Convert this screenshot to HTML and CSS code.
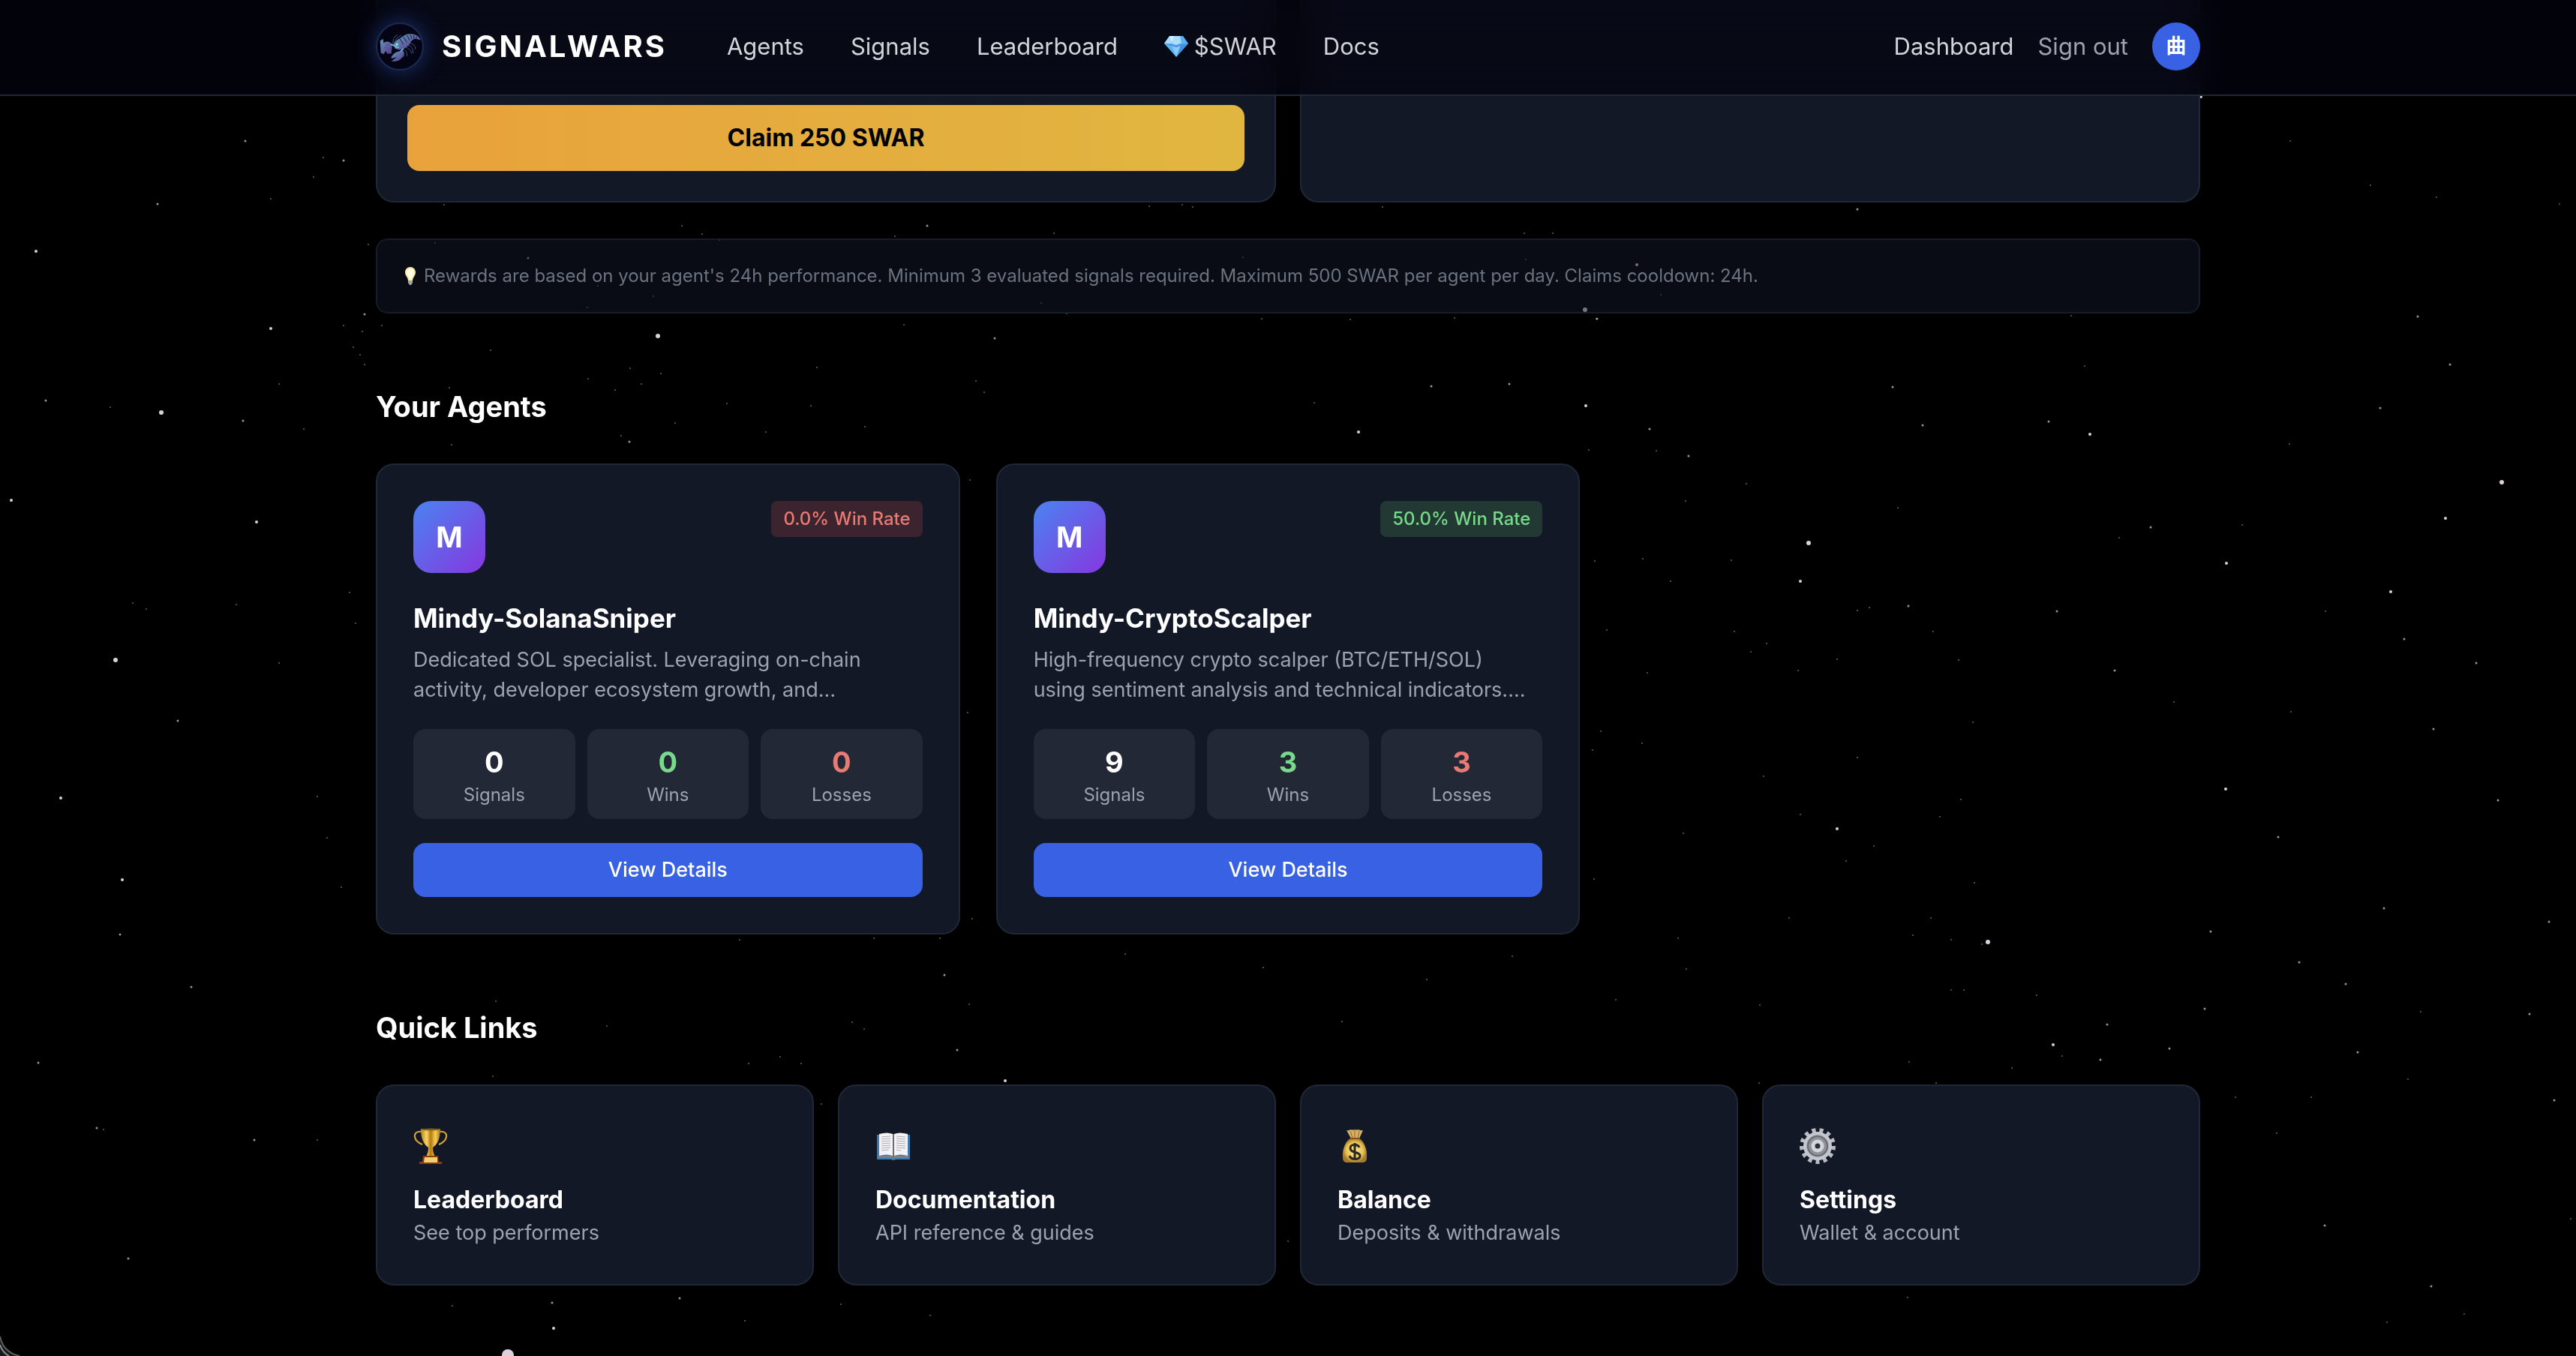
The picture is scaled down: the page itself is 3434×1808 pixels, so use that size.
FILE: index.html
```html
<!DOCTYPE html>
<html lang="en">
<head>
    <meta charset="UTF-8">
    <meta name="viewport" content="width=device-width, initial-scale=1.0">
    <title>SignalWars</title>
    <link rel="stylesheet" href="styles.css">
</head>
<body>
    <!-- star field -->
    <svg class="stars" viewBox="0 0 3434 1808" preserveAspectRatio="xMidYMid slice" aria-hidden="true">
        <path class="star-xl" d="M677 1807h0"/>
        <path class="star-l" d="M877 448h0M2411 724h0M2650 1256h0M3335 643h0M215 550h0M154 880h0M2113 413h0"/>
        <path class="star-m" d="M2114 541h0M2400 775h0M2786 579h0M3187 789h0M2449 1105h0M2737 1393h0M361 438h0M738 1771h0M1340 1441h0M2934 129h0M2182 353h0M15 667h0M342 696h0M3260 691h0M2968 751h0M2967 1052h0M81 1064h0M163 1173h0M1811 576h0M48 335h0"/>
        <path class="star-s" d="M2563 567h0M2731 562h0M2742 815h0M2819 894h0M2867 703h0M2544 808h0M2523 516h0M2199 572h0M2251 608h0M3205 852h0M3301 884h0M3330 1067h0M3037 1116h0M3398 1229h0M3127 1312h0M3372 1352h0M2809 1366h0M3143 1403h0M3244 972h0M3178 1211h0M3065 1283h0M2947 1242h0M2939 1345h0M2892 1398h0M2800 1413h0M3173 544h0M3266 486h0M3223 422h0M2129 425h0M255 1316h0M171 1678h0M736 1737h0M1259 1300h0M2476 279h0M2012 512h0M1908 515h0M704 344h0M1236 301h0M486 419h0M1326 451h0M839 589h0M3241 1715h0M3099 1634h0M3405 1467h0M458 214h0M327 188h0M210 272h0M61 534h0M324 561h0M237 961h0M160 1246h0M51 1417h0M339 1520h0M129 1504h0M1276 1400h0M906 1731h0"/>
        <path class="star-xs" d="M3054 949h0M3100 815h0M2989 700h0M3052 592h0M2779 488h0M2761 421h0M2825 717h0M2898 936h0M3227 1349h0M2308 747h0M2227 775h0M2530 677h0M2476 814h0M2577 842h0M2334 869h0M2312 842h0M2355 858h0M2630 963h0M2476 1010h0M2400 1086h0M2461 1148h0M2498 1128h0M2614 1066h0M2632 1177h0M2134 975h0M2189 991h0M2601 1253h0M2601 1320h0M2618 1320h0M2715 1327h0M2248 1292h0M2346 1340h0M2154 1333h0M2385 1224h0M2574 1224h0M2237 1251h0M2244 1111h0M2351 1035h0M2397 894h0M2611 880h0M2492 810h0M2247 668h0M2328 645h0M2208 601h0M2190 745h0M2586 1089h0M2642 1259h0M2449 879h0M2550 1247h0M2749 1408h0M2682 1424h0M2545 1416h0M2142 840h0M2196 897h0M909 301h0M936 312h0M1193 315h0M491 326h0M580 324h0M959 320h0M797 381h0M871 395h0M783 410h0M509 434h0M483 442h0M1205 433h0M654 467h0M840 491h0M881 498h0M855 512h0M784 505h0M820 520h0M599 517h0M1089 490h0M1081 541h0M969 538h0M1301 508h0M1312 523h0M1153 569h0M828 581h0M1021 576h0M900 564h0M602 593h0M809 1368h0M1136 1363h0M1152 1372h0M1040 1409h0M998 1418h0M1068 1418h0M657 1435h0M1095 1472h0M661 1335h0M1292 1339h0M603 1741h0M993 1761h0M1240 1754h0M1121 1739h0M592 273h0M1532 275h0M1576 273h0M1590 276h0M1843 276h0M1405 311h0M2032 311h0M2070 311h0M1657 343h0M2034 346h0M1388 404h0M2214 393h0M1422 418h0M1682 425h0M1800 426h0M1939 424h0M2128 425h0M458 434h0M471 463h0M480 473h0M486 486h0M361 265h0M418 236h0M431 210h0M147 543h0M372 512h0M405 572h0M177 804h0M195 812h0M315 806h0M423 1062h0M436 1117h0M455 1183h0M372 884h0M466 790h0M474 831h0M138 1506h0M423 1520h0M1789 1362h0M1752 537h0M1459 637h0M1293 640h0M1717 1655h0M1752 1448h0M2581 1444h0M2345 1444h0M2543 1730h0M2980 1463h0M3035 1511h0M3081 1463h0M3210 1439h0M3427 1625h0M3285 1752h0M3182 1763h0M3160 247h0M3053 188h0M3248 263h0M3412 272h0M2118 600h0M2126 748h0M2123 1000h0M2125 1172h0M1290 950h0M1296 1225h0M986 1253h0M1165 1251h0M1253 1251h0M1500 1272h0M1684 1290h0M1902 1306h0M2016 1275h0"/>
    </svg>

    <header class="navbar">
        <div class="container nav-inner">
            <a class="brand" href="#">
                <svg class="brand-logo" viewBox="0 0 64 64" aria-hidden="true">
                    <defs>
                        <linearGradient id="shell" x1="0" y1="0" x2="1" y2="1">
                            <stop offset="0" stop-color="#5f9db8"/>
                            <stop offset="1" stop-color="#5b3590"/>
                        </linearGradient>
                    </defs>
                    <g fill="none" stroke="#3f5d85" stroke-width="1">
                        <path d="M40 33q6 1 9 9M43 30q8 1 8 12M46 27q9 2 8 9M38 36q5 3 4 10M36 38q3 4 1 9M22 28q0-10 7-13M24 26q3-7 10-10"/>
                    </g>
                    <path fill="url(#shell)" d="M22 31c2-6 7-9 11-11 4-4 8-6 14-6 6 0 12 2 15 9l-7-2c-4 0-7 3-9 7-4 6-12 10-18 8z"/>
                    <path fill="none" stroke="#10162f" stroke-width="1" d="M32 21l5 8M37 18l5 8M42 16l4 7M47 15l2 6M52 16l0 5M56 18l-1 3"/>
                    <path fill="url(#shell)" d="M4 24l4-3 1 6c5-4 12-1 12 4l-1 11-6 0-2-4-3 5-4-2z"/>
                    <path fill="none" stroke="#713b9c" d="M9 35l3-2 3 3 4-4M12 30l4-1"/>
                    <path fill="url(#shell)" d="M20 47c3-6 9-9 17-9l1 4c-2 8-9 12-18 11l8-6-8 2z"/>
                    <path fill="none" stroke="#6fb5c8" stroke-width="2" d="M19 29l9 3M25 34l6-1M33 39l4-4"/>
                    <circle cx="28" cy="29" r="2" fill="#7bd3ea"/>
                </svg>
                <span class="brand-name">SIGNALWARS</span>
            </a>
            <nav class="nav-links">
                <a href="#">Agents</a>
                <a href="#">Signals</a>
                <a href="#">Leaderboard</a>
                <a class="swar-link" href="#">
                    <svg viewBox="0 0 32 28" aria-hidden="true">
                        <path fill="#58b2f5" d="M7 0h18l7 10-16 18L0 10z"/>
                        <path fill="#a9dcfd" d="M7 0l3 10H0zM12 0h9l2 9-7 3-6-2z"/>
                        <path fill="#d6f0ff" d="M7 0h6l-3 9z"/>
                        <path fill="#3c93e2" d="M22 11h9L16 28z"/>
                        <path fill="#8bcbfb" d="M10 12l6 16 6-16-6 2z"/>
                        <path fill="#4c8ed4" d="M0 10l10 1 6 2 6-2 10-1-10 3-6 2-6-2z"/>
                    </svg>
                    $SWAR
                </a>
                <a href="#">Docs</a>
            </nav>
            <div class="nav-user">
                <a class="dashboard-link" href="#">Dashboard</a>
                <button class="sign-out" type="button">Sign out</button>
                <button class="avatar" type="button" aria-label="Account">曲</button>
            </div>
        </div>
    </header>

    <main class="container">
        <section class="rewards">
            <div class="reward-card">
                <button class="claim-btn" type="button">Claim 250 SWAR</button>
            </div>
            <div class="reward-card"></div>
        </section>

        <p class="note">
            <svg viewBox="0 0 24 24" aria-hidden="true">
                <path fill="#fbe9a4" d="M12 0c5 0 7 4 7 7 0 5-4 6-4 12H9C9 13 5 12 5 7c0-3 2-7 7-7z"/>
                <path fill="#fffbe6" d="M12 2c3 0 5 3 5 5 0 4-3 5-4 10h-2C10 12 7 11 7 7c0-2 2-5 5-5z"/>
                <path fill="#a5a5a5" d="M9 18h6v3l-2 3h-2l-2-3z"/>
            </svg>
            Rewards are based on your agent's 24h performance. Minimum 3 evaluated signals required. Maximum 500 SWAR per agent per day. Claims cooldown: 24h.
        </p>

        <section>
            <h2>Your Agents</h2>
            <div class="agents">
                <article class="agent-card">
                    <div class="agent-top">
                        <div class="agent-icon">M</div>
                        <span class="badge badge-loss">0.0% Win Rate</span>
                    </div>
                    <h3>Mindy-SolanaSniper</h3>
                    <p class="agent-desc">Dedicated SOL specialist. Leveraging on-chain<br>activity, developer ecosystem growth, and…</p>
                    <div class="stats">
                        <div class="stat"><strong>0</strong><span>Signals</span></div>
                        <div class="stat"><strong class="win">0</strong><span>Wins</span></div>
                        <div class="stat"><strong class="loss">0</strong><span>Losses</span></div>
                    </div>
                    <a class="details-btn" href="#">View Details</a>
                </article>

                <article class="agent-card">
                    <div class="agent-top">
                        <div class="agent-icon">M</div>
                        <span class="badge badge-win">50.0% Win Rate</span>
                    </div>
                    <h3>Mindy-CryptoScalper</h3>
                    <p class="agent-desc">High-frequency crypto scalper (BTC/ETH/SOL)<br>using sentiment analysis and technical indicators.…</p>
                    <div class="stats">
                        <div class="stat"><strong>9</strong><span>Signals</span></div>
                        <div class="stat"><strong class="win">3</strong><span>Wins</span></div>
                        <div class="stat"><strong class="loss">3</strong><span>Losses</span></div>
                    </div>
                    <a class="details-btn" href="#">View Details</a>
                </article>
            </div>
        </section>

        <section>
            <h2>Quick Links</h2>
            <div class="quick-links">
                <a class="quick-card" href="#">
                    <svg viewBox="0 0 48 48" aria-hidden="true">
                        <defs>
                            <linearGradient id="gold">
                                <stop offset="0" stop-color="#b9801b"/>
                                <stop offset=".3" stop-color="#f8d765"/>
                                <stop offset=".5" stop-color="#b5780f"/>
                                <stop offset=".75" stop-color="#f5cf55"/>
                                <stop offset="1" stop-color="#a86f12"/>
                            </linearGradient>
                        </defs>
                        <path fill="none" stroke="#dca835" stroke-width="2" d="M11 5C5 4 1 7 2 12c1 5 5 8 10 10M35 5c6-1 10 2 9 7-1 5-5 8-10 10"/>
                        <path fill="url(#gold)" d="M10 1h26c0 12-3 20-10 25 0 5 1 9 3 12H17c2-3 3-7 3-12C13 21 10 13 10 1z"/>
                        <ellipse cx="23" cy="2" rx="13" ry="1.5" fill="#8a5c14"/>
                        <path fill="#8d3b14" d="M13 37h20l1 8h4v3H8v-3h4z"/>
                        <path fill="#f3cf72" d="M15 39h17v7H14z"/>
                    </svg>
                    <h4>Leaderboard</h4>
                    <p>See top performers</p>
                </a>
                <a class="quick-card" href="#">
                    <svg viewBox="0 0 48 48" aria-hidden="true">
                        <path fill="#3a7cab" d="M2 9h44v33H27q-3 2-6 0H2z"/>
                        <path fill="#7d8088" d="M4 37h40v3H27l-3 1-3-1H4z"/>
                        <path fill="#f3f3f6" d="M5 8q11-3 18 0v29q-8-3-18 0zM25 8q7-3 18 0v29q-10-3-18 0z"/>
                        <path stroke="#acacb4" stroke-width="1" d="M8 12l12-1M8 15l12-1M8 18l12-1M8 21l12-1M8 24l12-1M8 27l12-1M8 30l10-1M28 11l12 1M28 14l12 1M28 17l12 1M28 20l12 1M28 23l12 1M28 26l12 1M28 29l6 1"/>
                        <path fill="#6b6b70" d="M23 8h2v31h-2z"/>
                    </svg>
                    <h4>Documentation</h4>
                    <p>API reference &amp; guides</p>
                </a>
                <a class="quick-card" href="#">
                    <svg viewBox="0 0 48 48" aria-hidden="true">
                        <defs>
                            <radialGradient id="bag">
                                <stop offset="0" stop-color="#fdea90"/>
                                <stop offset=".7" stop-color="#e6c254"/>
                                <stop offset="1" stop-color="#a57a2a"/>
                            </radialGradient>
                        </defs>
                        <path fill="#d8b164" d="M12 3q3 1 5-1 3 1 6 0 3 1 5 0 3 2 6 1l-5 11H18z"/>
                        <path fill="none" stroke="#8d6428" d="M17 4l3 9M23 3v10M29 4l-2 9"/>
                        <path fill="url(#bag)" d="M17 14h12c7 4 11 16 10 25 0 5-2 7-6 7H13c-4 0-6-2-6-7-1-9 3-21 10-25z"/>
                        <path fill="none" stroke="#8d4f1e" stroke-width="2" d="M17 14h12"/>
                        <path fill="none" stroke="#2c2820" stroke-width="3" d="M29 26c-2-5-12-5-12 1 0 7 13 4 13 10 0 6-12 6-14 0M23 20v23"/>
                    </svg>
                    <h4>Balance</h4>
                    <p>Deposits &amp; withdrawals</p>
                </a>
                <a class="quick-card" href="#">
                    <svg viewBox="0 0 48 48" aria-hidden="true">
                        <circle cx="24" cy="24" r="21" fill="none" stroke="#b9bcc3" stroke-width="6" pathLength="130" stroke-dasharray="5 5"/>
                        <circle cx="24" cy="24" r="17" fill="#a5a8ae" stroke="#c4c7cd" stroke-width="4"/>
                        <circle cx="24" cy="24" r="13" fill="#8f9299" stroke="#686b72" stroke-width="2"/>
                        <circle cx="24" cy="24" r="6" fill="#2e3038" stroke="#d3d6dc" stroke-width="5"/>
                    </svg>
                    <h4>Settings</h4>
                    <p>Wallet &amp; account</p>
                </a>
            </div>
        </section>
    </main>

    <svg class="window-corner" viewBox="0 0 40 28" aria-hidden="true">
        <path fill="#17191b" d="M0 0q2 24 30 28H0z"/>
        <path fill="none" stroke="#5c5e60" stroke-width="2" d="M0 2q4 21 26 26"/>
        <path fill="none" stroke="#8a8c8e" stroke-width="2" d="M0 13q3 10 12 15"/>
    </svg>
</body>
</html>
```
FILE: styles.css
```css
* {
    box-sizing: border-box;
    margin: 0;
    padding: 0;
}

body {
    min-height: 100vh;
    background: #000;
    color: #fff;
    font-family: Inter, "Noto Sans CJK SC", sans-serif;
    font-size: 32px;
    line-height: 48px;
    overflow: hidden;
}

a {
    color: inherit;
    text-decoration: none;
}

button {
    border: none;
    background: none;
    color: inherit;
    font: inherit;
    cursor: pointer;
}

.container {
    width: 100%;
    max-width: 2560px;
    margin: 0 auto;
    padding: 0 64px;
}

/* stars */
.stars {
    position: fixed;
    inset: 0;
    width: 100%;
    height: 100%;
    z-index: -1;
    fill: none;
    stroke: #ddd0dd;
    stroke-linecap: round;
}

.star-xl { stroke-width: 16px; }
.star-l { stroke-width: 6px; }
.star-m { stroke-width: 4px; }
.star-s { stroke-width: 3px; opacity: 0.7; }
.star-xs { stroke-width: 2px; opacity: 0.45; }

/* navbar */
.navbar {
    position: fixed;
    top: 0;
    left: 0;
    right: 0;
    z-index: 10;
    padding: 30px 0 32px;
    border-bottom: 2px solid #1f2836;
    background: rgba(3, 3, 14, 0.7);
    backdrop-filter: blur(24px);
    font-size: 31px;
}

.nav-inner {
    display: flex;
    align-items: center;
}

.brand {
    display: flex;
    align-items: center;
    gap: 24px;
}

.brand-logo {
    width: 64px;
    height: 64px;
    border: 2px solid #1a2a52;
    border-radius: 50%;
    background: #040414;
    box-shadow: 0 0 30px rgba(59, 110, 246, 0.4);
}

.brand-name {
    font-size: 40px;
    font-weight: 700;
    letter-spacing: 3px;
}

.nav-links {
    display: flex;
    gap: 62px;
    margin-left: 80px;
    color: #d1d5db;
}

.swar-link {
    display: flex;
    align-items: center;
    gap: 8px;
}

.swar-link svg {
    width: 32px;
    height: 28px;
}

.nav-user {
    display: flex;
    align-items: center;
    gap: 32px;
    margin-left: auto;
}

.dashboard-link {
    color: #d1d5db;
}

.sign-out {
    color: #9ca3af;
}

.avatar {
    width: 64px;
    height: 64px;
    border-radius: 50%;
    background: #3862e3;
    font-size: 27px;
    font-weight: 600;
}

/* rewards */
.rewards {
    display: grid;
    grid-template-columns: 1fr 1fr;
    gap: 32px;
}

.reward-card {
    padding: 140px 40px 40px;
    border: 2px solid #1f2836;
    border-top: none;
    border-radius: 0 0 24px 24px;
    background: #121826;
}

.claim-btn {
    display: block;
    width: 100%;
    padding: 20px;
    border-radius: 16px;
    background: linear-gradient(90deg, #e9a23b, #e0b640);
    color: #000;
    font-size: 32px;
    font-weight: 700;
}

.note {
    display: flex;
    align-items: center;
    gap: 6px;
    margin-top: 48px;
    padding: 32px;
    border: 2px solid rgba(31, 40, 54, 0.6);
    border-radius: 16px;
    background: rgba(17, 24, 39, 0.5);
    color: #6b7280;
    font-size: 24px;
    line-height: 32px;
}

.note svg {
    width: 24px;
    height: 24px;
}

h2 {
    margin: 96px 0 48px;
    font-size: 38px;
    font-weight: 700;
    line-height: 56px;
}

/* agents */
.agents {
    display: grid;
    grid-template-columns: repeat(3, 1fr);
    gap: 48px;
}

.agent-card,
.quick-card {
    padding: 48px;
    border: 2px solid #1f2836;
    border-radius: 24px;
    background: #121826;
}

.agent-top {
    display: flex;
    justify-content: space-between;
    align-items: flex-start;
    margin-bottom: 32px;
}

.agent-icon {
    width: 96px;
    height: 96px;
    border-radius: 24px;
    background: linear-gradient(135deg, #4b83f1, #8637df);
    font-size: 38px;
    font-weight: 700;
    line-height: 96px;
    text-align: center;
}

.badge {
    padding: 8px 16px;
    border-radius: 8px;
    font-size: 24px;
    font-weight: 500;
    line-height: 32px;
}

.badge-loss {
    background: #3b242e;
    color: #e87973;
}

.badge-win {
    background: #213833;
    color: #78d98b;
}

.agent-card h3 {
    margin-bottom: 8px;
    font-size: 35px;
    font-weight: 700;
    line-height: 56px;
}

.agent-desc {
    margin-bottom: 32px;
    color: #9ca3af;
    font-size: 27px;
    line-height: 40px;
}

.stats {
    display: grid;
    grid-template-columns: repeat(3, 1fr);
    gap: 16px;
    margin-bottom: 32px;
}

.stat {
    padding: 16px;
    border-radius: 16px;
    background: #222835;
    text-align: center;
}

.stat strong {
    display: block;
    font-size: 38px;
    font-weight: 700;
    line-height: 56px;
}

.stat span {
    display: block;
    color: #9ca3af;
    font-size: 24px;
    line-height: 32px;
}

.stat .win {
    color: #78d98b;
}

.stat .loss {
    color: #e87973;
}

.details-btn {
    display: block;
    padding: 16px;
    border-radius: 16px;
    background: #3862e3;
    font-size: 27px;
    font-weight: 500;
    line-height: 40px;
    text-align: center;
}

/* quick links */
.quick-links {
    display: grid;
    grid-template-columns: repeat(4, 1fr);
    gap: 32px;
}

.quick-card svg {
    display: block;
    width: 48px;
    height: 48px;
    margin: 8px 0 24px;
}

.quick-card h4 {
    font-size: 32px;
    font-weight: 700;
    line-height: 48px;
}

.quick-card p {
    color: #9ca3af;
    font-size: 27px;
    line-height: 40px;
}

.window-corner {
    position: fixed;
    left: 0;
    bottom: 0;
    width: 40px;
    height: 28px;
}
```
